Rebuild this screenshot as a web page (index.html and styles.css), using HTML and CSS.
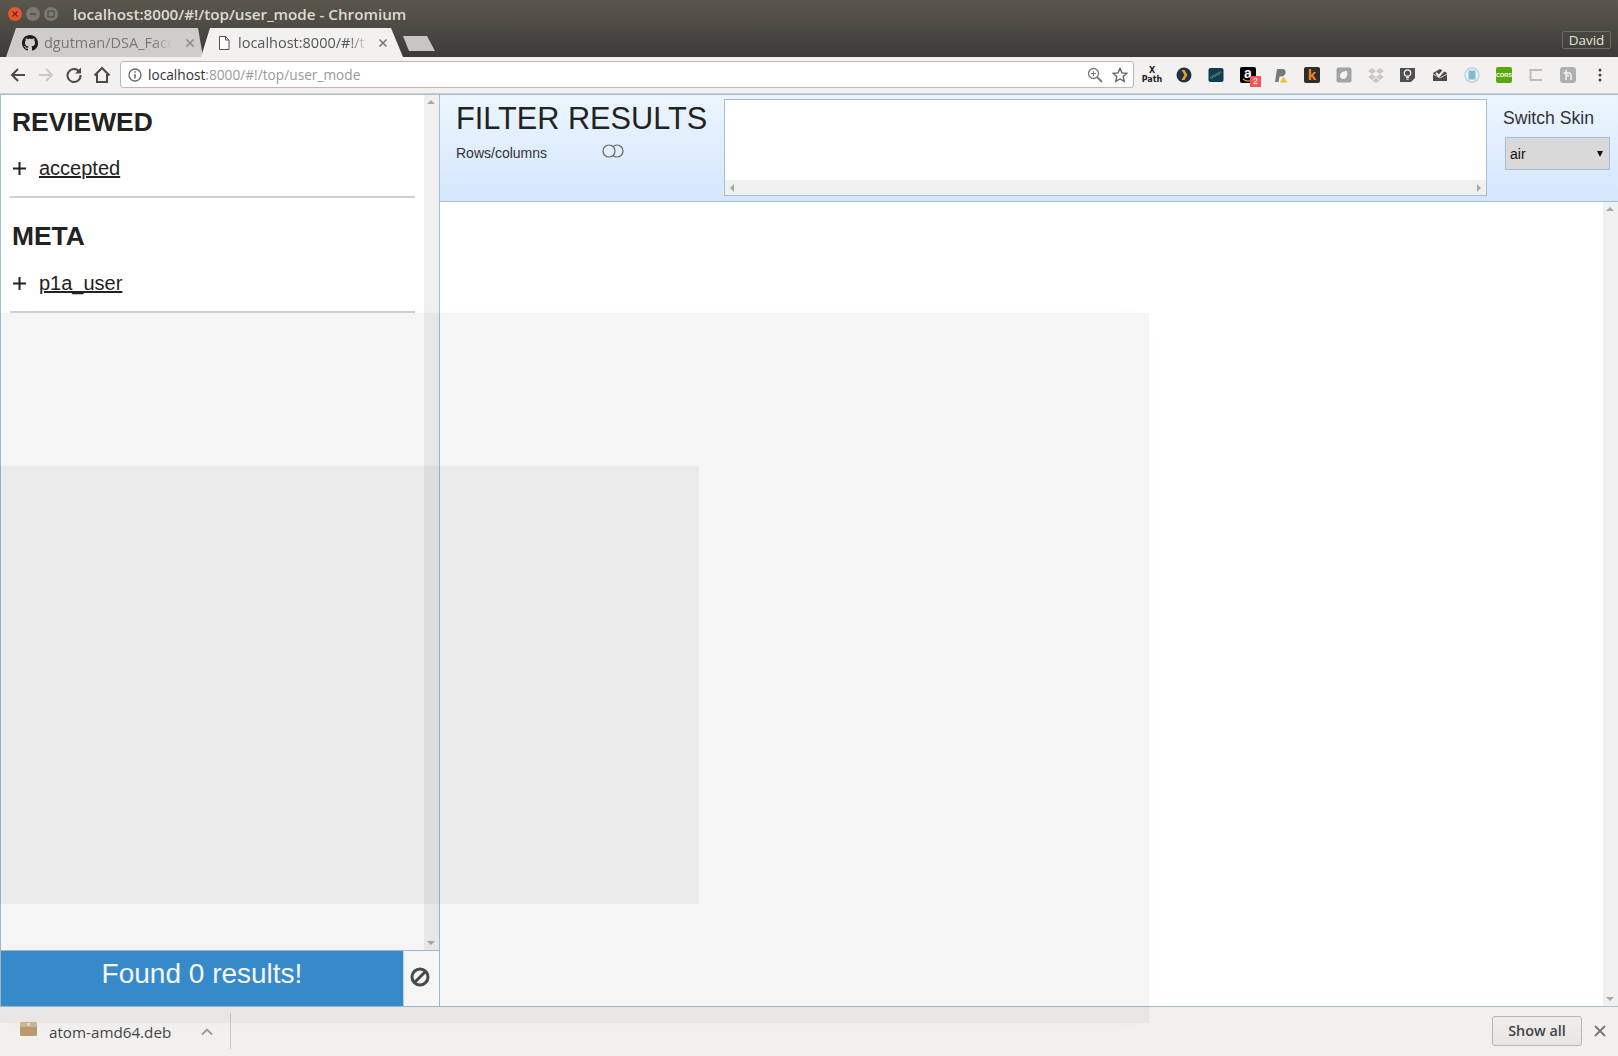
FILE: index.html
```html
<!DOCTYPE html>
<html lang="en">
<head>
  <meta charset="UTF-8">
  <title>localhost:8000/#!/top/user_mode - Chromium</title>
  <link rel="stylesheet" href="styles.css">
</head>
<body>
  <!-- window chrome -->
  <div class="titlebar">
    <span class="win-btn close"><svg width="8" height="8" viewBox="0 0 8 8"><path d="M1.5 1.5l5 5M6.5 1.5l-5 5" stroke="#70281a" stroke-width="1.3"/></svg></span>
    <span class="win-btn"><svg width="8" height="8" viewBox="0 0 8 8"><path d="M1 4h6" stroke="#44433f" stroke-width="1.3"/></svg></span>
    <span class="win-btn"><svg width="8" height="8" viewBox="0 0 8 8"><rect x="1" y="1" width="6" height="6" fill="none" stroke="#44433f"/></svg></span>
    <span class="win-title">localhost:8000/#!/top/user_mode - Chromium</span>
  </div>

  <div class="tabstrip">
    <div class="tab tab-back">
      <svg class="tab-icon" width="16" height="16" viewBox="0 0 16 16"><path fill="#1b1b1b" d="M8 0C3.58 0 0 3.58 0 8c0 3.54 2.29 6.53 5.47 7.59.4.07.55-.17.55-.38 0-.19-.01-.82-.01-1.49-2.01.37-2.53-.49-2.69-.94-.09-.23-.48-.94-.82-1.13-.28-.15-.68-.52-.01-.53.63-.01 1.08.58 1.23.82.72 1.21 1.87.87 2.33.66.07-.52.28-.87.51-1.07-1.78-.2-3.64-.89-3.64-3.95 0-.87.31-1.59.82-2.15-.08-.2-.36-1.02.08-2.12 0 0 .67-.21 2.2.82.64-.18 1.32-.27 2-.27.68 0 1.36.09 2 .27 1.53-1.04 2.2-.82 2.2-.82.44 1.1.16 1.92.08 2.12.51.56.82 1.27.82 2.15 0 3.07-1.87 3.75-3.65 3.95.29.25.54.73.54 1.48 0 1.07-.01 1.93-.01 2.2 0 .21.15.46.55.38A8.013 8.013 0 0016 8c0-4.42-3.58-8-8-8z"/></svg>
      <span class="tab-label">dgutman/DSA_Face</span>
      <svg class="tab-x" width="10" height="10" viewBox="0 0 10 10"><path d="M1.5 1.5l7 7M8.5 1.5l-7 7" stroke="#8a8987" stroke-width="1.6"/></svg>
    </div>
    <div class="tab tab-front">
      <svg class="tab-icon" width="16" height="16" viewBox="0 0 16 16"><path d="M3.500 1.500h6l3.500 3.500v9.500h-9.500zM9.500 1.500v3.500h3.500" fill="#fff" stroke="#555" stroke-width="1"/></svg>
      <span class="tab-label">localhost:8000/#!/t</span>
      <svg class="tab-x" width="10" height="10" viewBox="0 0 10 10"><path d="M1.5 1.5l7 7M8.5 1.5l-7 7" stroke="#77767a" stroke-width="1.6"/></svg>
    </div>
    <div class="new-tab"></div>
    <div class="profile">David</div>
  </div>

  <div class="toolbar">
    <svg class="nav-btn" width="18" height="18" viewBox="0 0 18 18"><path d="M16 9H3M9 3L3 9l6 6" fill="none" stroke="#4a4a4a" stroke-width="2"/></svg>
    <svg class="nav-btn" width="18" height="18" viewBox="0 0 18 18"><path d="M2 9h13M9 3l6 6-6 6" fill="none" stroke="#c9c9c9" stroke-width="2"/></svg>
    <svg class="nav-btn" width="18" height="18" viewBox="0 0 18 18"><path d="M14.500 6A6.500 6.500 0 1 0 15.500 9" fill="none" stroke="#4a4a4a" stroke-width="2"/><path d="M16 1.500V7.500H10z" fill="#4a4a4a"/></svg>
    <svg class="nav-btn" width="18" height="18" viewBox="0 0 18 18"><path d="M1.500 9.500L9 2l7.500 7.500M4 8v8h10V8" fill="none" stroke="#4a4a4a" stroke-width="2"/></svg>
    <div class="urlbar">
      <svg width="14" height="14" viewBox="0 0 14 14"><circle cx="7" cy="7" r="6" fill="none" stroke="#666" stroke-width="1.300"/><path d="M7 6v4.500M7 3.300v1.500" stroke="#666" stroke-width="1.500"/></svg>
      <span class="url-text"><span class="url-host">localhost</span>:8000/#!/top/user_mode</span>
      <svg class="url-zoom" width="16" height="16" viewBox="0 0 16 16"><circle cx="6.500" cy="6.500" r="5" fill="none" stroke="#777" stroke-width="1.300"/><path d="M10 10l5 5" stroke="#777" stroke-width="1.800"/><path d="M4 6.500h5M6.500 4v5" stroke="#777" stroke-width="1.100"/></svg>
      <svg class="url-star" width="16" height="16" viewBox="0 0 16 16"><path d="M8 1.500l2 4.400 4.800.500-3.600 3.200 1 4.700L8 12l-4.200 2.300 1-4.700-3.600-3.200 4.800-.500z" fill="none" stroke="#666" stroke-width="1.400"/></svg>
    </div>
    <div class="ext-list">
      <span class="ext ext-xpath"><b>X</b><br>Path</span>
      <span class="ext"><svg width="16" height="16" viewBox="0 0 16 16"><circle cx="8" cy="8" r="7.500" fill="#1f3049"/><path d="M5.500 3h3l3 5-3 5h-3l3-5z" fill="#eba11b"/></svg></span>
      <span class="ext"><svg width="16" height="16" viewBox="0 0 16 16"><rect x=".5" y="1" width="15" height="14" rx="2" fill="#15394f"/><path d="M2.500 11L13 5" stroke="#3fa35f" stroke-width="2.500" stroke-dasharray="1 .6"/></svg></span>
      <span class="ext">
        <span class="ext-box ext-amazon">a<svg class="ext-smile" width="12" height="4" viewBox="0 0 12 4"><path d="M1 1c3 2.500 7 2.500 10 0" fill="none" stroke="#f09a1a" stroke-width="1.200"/></svg></span>
        <span class="ext-badge">2</span>
      </span>
      <span class="ext"><svg width="16" height="16" viewBox="0 0 16 16"><path d="M3 15L5 2h5c3 0 4 2 3.500 4-.4 2-2 3.500-4.500 3.500H7.500L6.500 15z" fill="#77787a"/><path d="M11.500 9.500l4 6h-7.500z" fill="#f1c232"/></svg></span>
      <span class="ext"><span class="ext-box ext-k">k</span></span>
      <span class="ext"><svg width="16" height="16" viewBox="0 0 16 16"><rect x=".5" y=".5" width="15" height="15" rx="2" fill="#a3a3a3"/><path d="M4 9c0-3 3-5 7-5 1 3 0 7-3 8-2 .5-4-1-4-3z" fill="#f3f3f3"/></svg></span>
      <span class="ext"><svg width="16" height="16" viewBox="0 0 16 16"><path d="M4 1L0 4l4 3-4 3 4 3 4-3 4 3 4-3-4-3 4-3-4-3-4 3zM4 7l4-3 4 3-4 3z" fill="#c8c8c8"/><path d="M4 13.700l4 2.300 4-2.300-4-2.700z" fill="#c8c8c8"/></svg></span>
      <span class="ext"><svg width="16" height="16" viewBox="0 0 16 16"><path d="M0 1h15v10l-4 4H0z" fill="#505050"/><circle cx="7.500" cy="6" r="3.200" fill="none" stroke="#fff" stroke-width="1.200"/><path d="M6 10.500h3M6.300 12.200h2.400" stroke="#fff"/></svg></span>
      <span class="ext"><svg width="16" height="16" viewBox="0 0 16 16"><path d="M1 6l7-4 7 4v8H1z" fill="#4b4b4b"/><path d="M4 6l3 3 5-6" fill="none" stroke="#f2f1f0" stroke-width="2"/><path d="M1 7l7 4 7-4" fill="none" stroke="#f2f1f0" stroke-width=".8"/></svg></span>
      <span class="ext"><svg width="16" height="16" viewBox="0 0 16 16"><circle cx="8" cy="8" r="7" fill="none" stroke="#a9d5e4" stroke-width="1.300"/><rect x="4.500" y="3.500" width="7" height="9" rx="1" fill="#7fbbd2"/></svg></span>
      <span class="ext"><span class="ext-box ext-cors">CORS</span></span>
      <span class="ext"><svg width="16" height="16" viewBox="0 0 16 16"><path d="M14 3H2.500v10H14" fill="none" stroke="#bdbdbd" stroke-width="2"/></svg></span>
      <span class="ext"><svg width="16" height="16" viewBox="0 0 16 16"><rect width="16" height="16" rx="3" fill="#b0b0b0"/><path d="M6 3v10M3.500 6h5.500c2 0 2 2 2 3v4M9 9l-3-1" fill="none" stroke="#f2f2f2" stroke-width="1.500"/></svg></span>
      <span class="ext"><svg width="4" height="14" viewBox="0 0 4 14"><circle cx="2" cy="2" r="1.500" fill="#444"/><circle cx="2" cy="7" r="1.500" fill="#444"/><circle cx="2" cy="12" r="1.500" fill="#444"/></svg></span>
    </div>
  </div>

  <!-- page -->
  <div class="page">
    <aside class="side">
      <div class="side-scroll">
        <div class="facets">
          <h2>REVIEWED</h2>
          <div class="facet-row">
            <svg width="13" height="13" viewBox="0 0 13 13"><path d="M0 6.500h13M6.500 0v13" stroke="#222" stroke-width="2"/></svg>
            <a href="#">accepted</a>
          </div>
          <hr>
          <h2>META</h2>
          <div class="facet-row">
            <svg width="13" height="13" viewBox="0 0 13 13"><path d="M0 6.500h13M6.500 0v13" stroke="#222" stroke-width="2"/></svg>
            <a href="#">p1a_user</a>
          </div>
          <hr>
        </div>
        <div class="vscroll">
          <span class="arrow-up"></span>
          <span class="arrow-down"></span>
        </div>
      </div>
      <div class="found-row">
        <div class="found">Found 0 results!</div>
        <div class="clear-btn"><svg width="20" height="20" viewBox="0 0 20 20"><circle cx="10" cy="10" r="8" fill="none" stroke="#4d4d4d" stroke-width="3"/><path d="M4.500 15.500l11-11" stroke="#4d4d4d" stroke-width="3"/></svg></div>
      </div>
    </aside>

    <main class="main">
      <header class="filter-head">
        <div class="filter-title">
          <h1>FILTER RESULTS</h1>
          <div class="rows-line">
            <span>Rows/columns</span>
            <svg width="22" height="14" viewBox="0 0 22 14"><circle cx="15" cy="7" r="6" fill="none" stroke="#666" stroke-width="1.200"/><circle cx="7" cy="7" r="6" fill="#e3effe" stroke="#666" stroke-width="1.200"/></svg>
          </div>
        </div>
        <div class="chips">
          <div class="chips-body"></div>
          <div class="hscroll">
            <span class="arrow-left"></span>
            <span class="arrow-right"></span>
          </div>
        </div>
        <div class="skin">
          <div class="skin-label">Switch Skin</div>
          <div class="skin-select"><span>air</span><span class="skin-arrow"></span></div>
        </div>
      </header>
      <div class="results">
        <div class="results-body"></div>
        <div class="vscroll">
          <span class="arrow-up"></span>
          <span class="arrow-down"></span>
        </div>
      </div>
    </main>
  </div>

  <div class="downloads">
    <svg class="pkg" width="17" height="14" viewBox="0 0 17 14"><rect y="1" width="17" height="13" rx="1.500" fill="#b89a72"/><rect width="17" height="5" rx="1.500" fill="#cfb48e"/><rect x="7" y="1" width="3" height="3" fill="#e6d6bc"/></svg>
    <span class="dl-name">atom-amd64.deb</span>
    <svg class="dl-chevron" width="12" height="8" viewBox="0 0 12 8"><path d="M1 6.500l5-5 5 5" fill="none" stroke="#999" stroke-width="1.800"/></svg>
    <span class="dl-sep"></span>
    <button class="show-all">Show all</button>
    <svg class="dl-close" width="12" height="12" viewBox="0 0 12 12"><path d="M1 1l10 10M11 1L1 11" stroke="#777" stroke-width="1.800"/></svg>
  </div>

  <div class="veil veil-big"></div>
  <div class="veil veil-small"></div>
</body>
</html>
```

FILE: styles.css
```css
* { box-sizing: border-box; }
html, body { margin: 0; height: 100%; overflow: hidden; }
body {
  width: 1618px;
  height: 1056px;
  display: flex;
  flex-direction: column;
  position: relative;
  font-family: "Liberation Sans", Arial, sans-serif;
  color: #222;
  background: #fff;
}

/* window chrome */
.titlebar {
  height: 28px;
  flex: none;
  display: flex;
  align-items: center;
  padding-left: 8px;
  gap: 4px;
  background: linear-gradient(#5a574d, #4c4a43);
}
.win-btn {
  width: 14px;
  height: 14px;
  border-radius: 50%;
  background: #7b7971;
  display: flex;
  align-items: center;
  justify-content: center;
}
.win-btn.close { background: #e2572c; }
.win-title {
  margin-left: 11px;
  font-family: "Open Sans", sans-serif;
  font-size: 15.200px;
  font-weight: 600;
  color: #dfdbd2;
}

.tabstrip {
  height: 29px;
  flex: none;
  display: flex;
  align-items: stretch;
  padding-left: 6px;
  background: linear-gradient(#4c4a43, #3c3b37);
}
.tab {
  display: flex;
  align-items: center;
  font-family: "Open Sans", sans-serif;
  font-size: 14.5px;
}
.tab-back {
  width: 197px;
  padding-left: 16px;
  background: #cfcdca;
  color: #777;
  clip-path: polygon(0 100%, 10px 0, 192px 0, 197px 100%);
}
.tab-front {
  width: 202px;
  margin-left: -2px;
  padding-left: 15px;
  background: #f2f1f0;
  color: #555;
  clip-path: polygon(0 100%, 9px 0, 190px 0, 202px 100%);
}
.tab-icon { flex: none; margin-top: 1px; }
.tab-label {
  margin-left: 6px;
  white-space: nowrap;
  -webkit-mask-image: linear-gradient(to right, #000 85%, transparent);
  mask-image: linear-gradient(to right, #000 85%, transparent);
}
.tab-back .tab-label { width: 128px; }
.tab-back .tab-x { margin-left: 13px; }
.tab-front .tab-label { width: 130px; }
.tab-front .tab-x { margin-left: 10px; }
.tab-x { flex: none; }
.new-tab {
  width: 32px;
  height: 15px;
  margin: 8px 0 0 0;
  background: #c8c6c2;
  clip-path: polygon(0 0, 24px 0, 100% 100%, 6px 100%);
}
.profile {
  margin: 3px 7px 0 auto;
  width: 49px;
  height: 18px;
  border: 1px solid #6b6a65;
  border-radius: 2px;
  font-family: "Open Sans", sans-serif;
  font-size: 13.500px;
  line-height: 16px;
  text-align: center;
  color: #e4e2dc;
}

.toolbar {
  height: 37px;
  flex: none;
  display: flex;
  align-items: center;
  padding: 0 0 1px 9px;
  background: #f2f1f0;
  border-bottom: 1px solid #cfcfcf;
}
.nav-btn { flex: none; margin-right: 10px; }
.urlbar {
  flex: none;
  width: 1014px;
  height: 27px;
  margin-left: -1px;
  display: flex;
  align-items: center;
  padding: 0 5px 0 7px;
  background: #fff;
  border: 1px solid #b9b9b9;
  border-radius: 3px;
}
.url-text {
  margin-left: 6px;
  font-family: "Open Sans", sans-serif;
  font-size: 13.700px;
  color: #999;
}
.url-host { color: #333; }
.url-zoom { margin-left: auto; margin-right: 9px; }
.ext-list {
  display: flex;
  align-items: center;
  margin-left: 2px;
}
.ext {
  width: 32px;
  height: 18px;
  display: flex;
  align-items: center;
  justify-content: center;
  position: relative;
  flex: none;
}
.ext-xpath {
  display: block;
  font-family: "DejaVu Sans", sans-serif;
  font-size: 8px;
  font-weight: 700;
  line-height: 9px;
  text-align: center;
  color: #222;
}
.ext-box {
  width: 16px;
  height: 16px;
  border-radius: 2px;
  display: flex;
  align-items: center;
  justify-content: center;
  position: relative;
  overflow: hidden;
}
.ext-amazon {
  padding-bottom: 3px;
  background: #000;
  color: #fff;
  font-size: 14px;
  font-weight: 700;
}
.ext-smile {
  position: absolute;
  left: 2px;
  bottom: 1px;
}
.ext-badge {
  position: absolute;
  left: 18px;
  top: 10px;
  width: 11px;
  height: 11px;
  background: #f5555c;
  color: #fff;
  font-size: 9px;
  line-height: 11px;
  text-align: center;
}
.ext-k {
  background: #2d2d2d;
  color: #ee8b1a;
  font-size: 15px;
  font-weight: 700;
}
.ext-cors {
  background: #5fa60e;
  color: #fff;
  font-size: 5.500px;
  font-weight: 700;
}

/* page */
.page {
  flex: none;
  height: 913px;
  display: flex;
  border-top: 1px solid #a4bed4;
  border-bottom: 1px solid #a4bed4;
}
.side {
  width: 440px;
  flex: none;
  display: flex;
  flex-direction: column;
  border-left: 1px solid #a4bed4;
  border-right: 1px solid #a4bed4;
}
.side-scroll {
  flex: 1;
  display: flex;
  min-height: 0;
}
.facets {
  flex: 1;
  padding: 12px 9px 0 9px;
}
.facets h2 {
  margin: 0 0 0 2px;
  font-size: 26.400px;
  line-height: 30px;
  font-weight: 700;
  color: #222;
}
.facet-row {
  display: flex;
  align-items: center;
  height: 24px;
  margin: 19px 0 0 3px;
  font-size: 20px;
}
.facets hr + h2 + .facet-row { margin-top: 20px; }
.facet-row a {
  margin-left: 13px;
  color: #222;
  text-decoration: underline;
}
.facets hr {
  height: 2px;
  margin: 16px 0 23px;
  border: 0;
  background: #d0d0d0;
}
.vscroll {
  position: relative;
  width: 15px;
  flex: none;
  background: #f0f0f0;
}
.arrow-up, .arrow-down, .arrow-left, .arrow-right {
  position: absolute;
  width: 0;
  height: 0;
  border-style: solid;
  border-color: transparent;
}
.arrow-up {
  top: 5px;
  left: 3px;
  border-width: 0 4px 4px;
  border-bottom-color: #a8a8a8;
}
.arrow-down {
  bottom: 5px;
  left: 3px;
  border-width: 4px 4px 0;
  border-top-color: #a8a8a8;
}
.found-row {
  height: 56px;
  flex: none;
  display: flex;
  border-top: 1px solid #a4bed4;
}
.found {
  width: 402px;
  flex: none;
  padding-top: 7px;
  background: #3a90d2;
  color: #fff;
  font-size: 28px;
  line-height: 32px;
  text-align: center;
}
.clear-btn {
  flex: 1;
  display: flex;
  align-items: center;
  justify-content: center;
  border-left: 1px solid #c6d6e4;
}
.clear-btn svg { margin: 0 3px 4px 0; }

.main {
  flex: 1;
  display: flex;
  flex-direction: column;
  min-width: 0;
}
.filter-head {
  height: 107px;
  flex: none;
  display: flex;
  background: linear-gradient(#ebf5ff, #d5e6fd);
  border-bottom: 1px solid #a4bed4;
}
.filter-title {
  width: 284px;
  flex: none;
  padding: 5px 0 0 16px;
}
.filter-title h1 {
  margin: 0;
  font-size: 30.700px;
  line-height: 38px;
  font-weight: 400;
  color: #222;
}
.rows-line {
  display: flex;
  align-items: center;
  margin-top: 7px;
  font-size: 14px;
  color: #333;
}
.rows-line span { width: 146px; }
.rows-line svg { margin-top: -5px; }
.chips {
  width: 763px;
  height: 97px;
  margin-top: 4px;
  flex: none;
  display: flex;
  flex-direction: column;
  border: 1px solid #a4bed4;
  background: #fff;
}
.chips-body { flex: 1; }
.hscroll {
  position: relative;
  height: 15px;
  flex: none;
  background: #f0f0f0;
}
.arrow-left {
  left: 5px;
  top: 4px;
  border-width: 4px 4px 4px 0;
  border-right-color: #a8a8a8;
}
.arrow-right {
  right: 5px;
  top: 4px;
  border-width: 4px 0 4px 4px;
  border-left-color: #a8a8a8;
}
.skin {
  flex: 1;
  padding: 13px 8px 0 16px;
}
.skin-label {
  font-size: 17.600px;
  line-height: 21px;
  color: #333;
}
.skin-select {
  width: 105px;
  height: 33px;
  margin: 8px 0 0 2px;
  display: flex;
  align-items: center;
  justify-content: space-between;
  padding: 0 6px 0 4px;
  background: #d9d9d9;
  border: 1px solid #a4bed4;
  font-size: 14px;
  color: #111;
}
.skin-arrow {
  width: 0;
  height: 0;
  border-style: solid;
  border-width: 6px 3px 0;
  border-color: #111 transparent transparent;
}
.results {
  flex: 1;
  display: flex;
  min-height: 0;
}
.results-body { flex: 1; }

/* downloads shelf */
.downloads {
  flex: 1;
  display: flex;
  align-items: center;
  padding: 0 12px 2px 20px;
  background: #f1f0ee;
  font-family: "Open Sans", sans-serif;
}
.pkg { margin-top: -4px; flex: none; }
.dl-name {
  margin: 2px 0 0 12px;
  width: 152px;
  font-size: 15.200px;
  color: #444;
}
.dl-chevron { margin-top: 2px; flex: none; }
.dl-sep {
  width: 1px;
  height: 36px;
  margin-left: 17px;
  background: #c9c9c7;
}
.show-all {
  margin-left: auto;
  width: 90px;
  height: 30px;
  padding: 0;
  border: 1px solid #b5b5b2;
  border-radius: 3px;
  background: linear-gradient(#efeeec, #e6e5e3);
  font-family: "Open Sans", sans-serif;
  font-size: 14.400px;
  font-weight: 600;
  color: #444;
}
.dl-close { margin-left: 12px; flex: none; }

/* overlays */
.veil {
  position: absolute;
  left: 0;
  background: rgba(0, 0, 0, 0.04);
  pointer-events: none;
}
.veil-big {
  top: 313px;
  width: 1149px;
  height: 710px;
  box-shadow: 0 0 24px rgba(0, 0, 0, 0.01);
}
.veil-small { top: 466px; width: 699px; height: 438px; }
```
